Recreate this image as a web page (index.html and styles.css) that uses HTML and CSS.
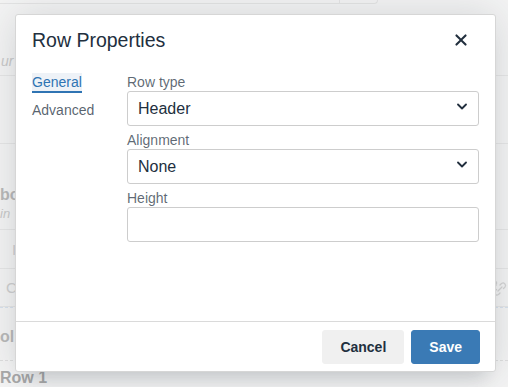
FILE: index.html
```html
<!DOCTYPE html>
<html lang="en">
<head>
<meta charset="utf-8">
<title>Row Properties</title>
<link rel="stylesheet" href="styles.css">
</head>
<body>
<div class="page">
  <div class="topbar"><div class="topbar-seg"></div></div>
  <div class="bg-row bg-row-a"><span class="bg-italic">ur</span></div>
  <div class="bg-row bg-row-b"></div>
  <div class="bg-row bg-row-c">
    <span class="bg-bold">bo</span>
    <span class="bg-italic small">in</span>
  </div>
  <div class="bg-row bg-row-d"><span class="bg-mark">I</span></div>
  <div class="bg-row bg-row-e">
    <span class="bg-mark">C</span>
    <svg class="bg-link" width="16" height="16" viewBox="0 0 16 16"><path d="M6 10l4-4M4.5 8.5l-1.5 1.5a2.5 2.5 0 0 0 3.5 3.5L8 12M8 4l1.5-1.5a2.5 2.5 0 0 1 3.5 3.5L11.5 7.5M2 4.5h2M4.5 1v2" fill="none" stroke="#d4d4d4" stroke-width="1.3" stroke-linecap="round"/></svg>
  </div>
  <div class="bg-row bg-row-f">
    <span class="bg-bold">ol</span>
  </div>
  <div class="bg-row bg-row-g"><span class="bg-bold dark">Row 1</span></div>
</div>

<div class="dialog" role="dialog">
  <div class="dialog-header">
    <div class="dialog-title">Row Properties</div>
    <button class="close-btn" aria-label="Close">
      <svg width="24" height="24" viewBox="0 0 24 24"><path d="M17.3 8.2L13.4 12l3.9 3.8a1 1 0 0 1-1.5 1.5L12 13.4l-3.8 3.9a1 1 0 0 1-1.5-1.5l3.9-3.8-3.9-3.8a1 1 0 0 1 1.5-1.5l3.8 3.9 3.8-3.9a1 1 0 0 1 1.5 1.5z" fill="#222f3e"/></svg>
    </button>
  </div>
  <div class="dialog-body">
    <div class="tabs">
      <div class="tab active">General</div>
      <div class="tab">Advanced</div>
    </div>
    <div class="fields">
      <div class="field">
        <label class="label">Row type</label>
        <div class="select">
          <span>Header</span>
          <svg class="chev" width="10" height="7" viewBox="0 0 10 7"><path d="M1 1.5l4 4 4-4" fill="none" stroke="#222f3e" stroke-width="1.8" stroke-linecap="round" stroke-linejoin="round"/></svg>
        </div>
      </div>
      <div class="field">
        <label class="label">Alignment</label>
        <div class="select">
          <span>None</span>
          <svg class="chev" width="10" height="7" viewBox="0 0 10 7"><path d="M1 1.5l4 4 4-4" fill="none" stroke="#222f3e" stroke-width="1.8" stroke-linecap="round" stroke-linejoin="round"/></svg>
        </div>
      </div>
      <div class="field">
        <label class="label">Height</label>
        <div class="input"></div>
      </div>
    </div>
  </div>
  <div class="dialog-footer">
    <button class="btn btn-secondary">Cancel</button>
    <button class="btn btn-primary">Save</button>
  </div>
</div>
</body>
</html>
```

FILE: styles.css
```css
* { box-sizing: border-box; }
html, body { margin: 0; padding: 0; }
body {
  width: 508px;
  height: 387px;
  overflow: hidden;
  background: #f4f4f4;
  font-family: "Liberation Sans", Arial, sans-serif;
  color: #222f3e;
  position: relative;
}

/* faded background page */
.page { width: 508px; }
.topbar {
  width: 378px;
  height: 4px;
  border-bottom: 1px solid #e4e4e4;
  border-right: 1px solid #e4e4e4;
  border-bottom-right-radius: 4px;
  display: flex;
  justify-content: flex-end;
}
.topbar-seg { width: 38px; border-left: 1px solid #e4e4e4; }
.bg-row {
  border-bottom: 1px solid #e6e6e6;
  display: flex;
  flex-direction: column;
  justify-content: flex-end;
  align-items: flex-start;
  white-space: nowrap;
  position: relative;
}
.bg-row-a { height: 72px; padding-bottom: 6px; padding-left: 1px; }
.bg-row-b { height: 68px; }
.bg-row-c { height: 86px; padding-bottom: 8px; }
.bg-row-d { height: 39px; justify-content: center; padding-left: 12px; }
.bg-row-e { height: 38px; justify-content: center; padding-left: 6px; }
.bg-row-f {
  height: 54px;
  border-top: 1px dashed #d8e2ee;
  border-bottom: 1px dashed #dedede;
  justify-content: center;
  padding-top: 6px;
}
.bg-row-g { height: 40px; border-bottom: none; justify-content: flex-start; padding-top: 8px; }
.bg-italic { font-style: italic; font-size: 14px; color: #c9c9c9; }
.bg-italic.small { font-size: 13px; margin-top: 2px; }
.bg-bold { font-weight: bold; font-size: 16px; color: #b9b9b9; }
.bg-bold.dark { color: #a9a9a9; }
.bg-mark { font-size: 15px; color: #cfcfcf; }
.bg-link { position: absolute; right: 0; top: 12px; }

/* dialog */
.dialog {
  position: absolute;
  left: 15px;
  top: 14px;
  width: 481px;
  height: 358px;
  background: #fff;
  border: 1px solid #d6d6d6;
  border-radius: 3px;
  box-shadow: 0 16px 16px -10px rgba(34, 47, 62, 0.15), 0 0 40px 1px rgba(34, 47, 62, 0.15);
  display: flex;
  flex-direction: column;
}
.dialog-header {
  display: flex;
  align-items: center;
  justify-content: space-between;
  padding: 13px 16px 0 16px;
}
.dialog-title {
  font-size: 19.5px;
  line-height: 24px;
  color: #222f3e;
}
.close-btn {
  width: 36px;
  height: 24px;
  padding: 0;
  border: none;
  background: transparent;
  display: flex;
  align-items: center;
  justify-content: center;
}
.close-btn svg { display: block; }

.dialog-body {
  flex: 1;
  display: flex;
  padding: 21px 16px 0 16px;
}
.tabs {
  width: 95px;
  flex: none;
  display: flex;
  flex-direction: column;
  align-items: flex-start;
  gap: 8px;
}
.tab {
  font-size: 14px;
  line-height: 18px;
  color: rgba(34, 47, 62, 0.75);
  border-bottom: 2px solid transparent;
}
.tab.active {
  color: #2f74b3;
  border-bottom-color: #2f74b3;
  background: #eef2f7;
}
.fields {
  flex: 1;
  display: flex;
  flex-direction: column;
  gap: 5px;
}
.label {
  display: block;
  font-size: 14px;
  line-height: 18px;
  color: rgba(34, 47, 62, 0.72);
}
.select, .input {
  height: 35px;
  border: 1px solid #cdcdcd;
  border-radius: 3px;
  background: #fff;
}
.select {
  display: flex;
  align-items: center;
  justify-content: space-between;
  padding: 0 11px 0 10px;
  font-size: 16px;
  color: #222f3e;
}
.chev { display: block; margin-top: -5px; }

.dialog-footer {
  border-top: 1px solid #dadada;
  padding: 8px 15px 7px 16px;
  display: flex;
  justify-content: flex-end;
  gap: 7px;
}
.btn {
  height: 34px;
  padding: 0 17px;
  border-radius: 3px;
  font-family: "Liberation Sans", Arial, sans-serif;
  font-size: 14px;
  font-weight: bold;
  border: 1px solid transparent;
}
.btn-secondary { background: #f0f0f0; border-color: #f0f0f0; color: #222f3e; }
.btn-primary { background: #3a7ab5; border-color: #3a7ab5; color: #fff; }
```
